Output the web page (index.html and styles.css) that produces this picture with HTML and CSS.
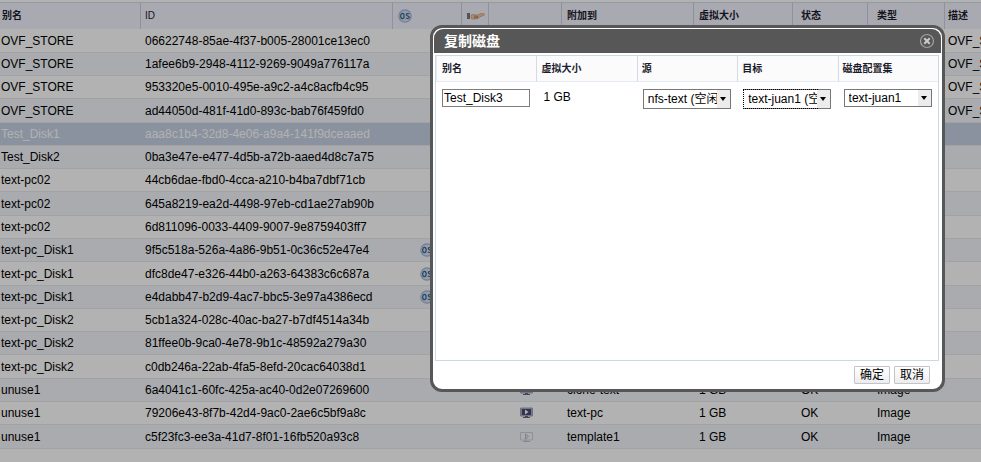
FILE: index.html
```html
<!DOCTYPE html>
<html lang="zh-CN">
<head>
<meta charset="utf-8">
<title>复制磁盘</title>
<link rel="stylesheet" href="styles.css">
</head>
<body>
<svg class="defs" aria-hidden="true">
  <symbol id="os" viewBox="0 0 14 14">
    <circle cx="7" cy="7" r="6.2" fill="#d3def2" stroke="#a9b4d4" stroke-width="1.2"/>
    <ellipse cx="4.4" cy="7" rx="1.7" ry="2.6" fill="none" stroke="#35688a" stroke-width="1.2"/>
    <path d="M11.4 5.1C10.3 4.100 8.200 4.400 8.300 5.700C8.400 7.200 11.300 6.700 11.300 8.300C11.300 9.800 8.900 9.800 7.900 8.900" fill="none" stroke="#35688a" stroke-width="1.2"/>
  </symbol>
  <symbol id="hand" viewBox="0 0 18 8">
    <path d="M0 1h3v6H0z" fill="#77778a"/><path d="M3 2h1v5H3z" fill="#fff"/>
    <path d="M4 3L7 2.500L10 3.200L14 1.600L17 1.600C18 2 17.600 3.300 16.500 3.500L13 4.700L11.500 6.200L9 7H5.500L4 6.400z" fill="#f3c5a0" stroke="#c98f66" stroke-width=".6"/>
    <path d="M7 4l4 .5M7 5.600h4.400" stroke="#a8683c" stroke-width=".7"/>
  </symbol>
  <symbol id="screen" viewBox="0 0 13 12">
    <path d="M.5 1h12v8H.5z" fill="#a9a9c8" stroke="#a0a0c4"/><path d="M2 2h9v6H2z" fill="#4b4b68"/>
    <path d="M5 2.500v5L8.500 5z" fill="#fff"/><path d="M5 9h3v1h2v1H3v-1h2z" fill="#65657d"/>
  </symbol>
  <symbol id="screen-off" viewBox="0 0 13 12">
    <path d="M.5 1.500h12v7.500H.5z" fill="#f5f5fa" stroke="#cfcfdd"/><path d="M5.500 3v5L8.500 5.500z" fill="none" stroke="#b4b4ca"/>
    <path d="M6 9v1M3 10.500h7" stroke="#bebed2"/>
  </symbol>
</svg>
<main class="page">
<table class="disks">
<colgroup><col class="w-name"><col class="w-id"><col class="w-os"><col class="w-share"><col class="w-icon"><col class="w-to"><col class="w-size"><col class="w-state"><col class="w-type"><col></colgroup>
<thead><tr><th>别名</th><th>ID</th><th><svg class="os"><use href="#os"/></svg></th><th><svg class="hand"><use href="#hand"/></svg></th><th class="plain"></th><th>附加到</th><th>虚拟大小</th><th class="state">状态</th><th class="type">类型</th><th>描述</th></tr></thead>
<tbody>
<tr><td>OVF_STORE</td><td>06622748-85ae-4f37-b005-28001ce13ec0</td><td></td><td></td><td></td><td></td><td></td><td></td><td></td><td>OVF_STORE</td></tr>
<tr><td>OVF_STORE</td><td>1afee6b9-2948-4112-9269-9049a776117a</td><td></td><td></td><td></td><td></td><td></td><td></td><td></td><td>OVF_STORE</td></tr>
<tr><td>OVF_STORE</td><td>953320e5-0010-495e-a9c2-a4c8acfb4c95</td><td></td><td></td><td></td><td></td><td></td><td></td><td></td><td>OVF_STORE</td></tr>
<tr><td>OVF_STORE</td><td>ad44050d-481f-41d0-893c-bab76f459fd0</td><td></td><td></td><td></td><td></td><td></td><td></td><td></td><td>OVF_STORE</td></tr>
<tr class="selected"><td>Test_Disk1</td><td>aaa8c1b4-32d8-4e06-a9a4-141f9dceaaed</td><td></td><td></td><td></td><td></td><td></td><td></td><td></td><td></td></tr>
<tr><td>Test_Disk2</td><td>0ba3e47e-e477-4d5b-a72b-aaed4d8c7a75</td><td></td><td></td><td></td><td></td><td></td><td></td><td></td><td></td></tr>
<tr><td>text-pc02</td><td>44cb6dae-fbd0-4cca-a210-b4ba7dbf71cb</td><td></td><td></td><td></td><td></td><td></td><td></td><td></td><td></td></tr>
<tr><td>text-pc02</td><td>645a8219-ea2d-4498-97eb-cd1ae27ab90b</td><td></td><td></td><td></td><td></td><td></td><td></td><td></td><td></td></tr>
<tr><td>text-pc02</td><td>6d811096-0033-4409-9007-9e8759403ff7</td><td></td><td></td><td></td><td></td><td></td><td></td><td></td><td></td></tr>
<tr><td>text-pc_Disk1</td><td>9f5c518a-526a-4a86-9b51-0c36c52e47e4</td><td class="mid"><svg class="os"><use href="#os"/></svg></td><td></td><td></td><td></td><td></td><td></td><td></td><td></td></tr>
<tr><td>text-pc_Disk1</td><td>dfc8de47-e326-44b0-a263-64383c6c687a</td><td class="mid"><svg class="os"><use href="#os"/></svg></td><td></td><td></td><td></td><td></td><td></td><td></td><td></td></tr>
<tr><td>text-pc_Disk1</td><td>e4dabb47-b2d9-4ac7-bbc5-3e97a4386ecd</td><td class="mid"><svg class="os"><use href="#os"/></svg></td><td></td><td></td><td></td><td></td><td></td><td></td><td></td></tr>
<tr><td>text-pc_Disk2</td><td>5cb1a324-028c-40ac-ba27-b7df4514a34b</td><td></td><td></td><td></td><td></td><td></td><td></td><td></td><td></td></tr>
<tr><td>text-pc_Disk2</td><td>81ffee0b-9ca0-4e78-9b1c-48592a279a30</td><td></td><td></td><td></td><td></td><td></td><td></td><td></td><td></td></tr>
<tr><td>text-pc_Disk2</td><td>c0db246a-22ab-4fa5-8efd-20cac64038d1</td><td></td><td></td><td></td><td></td><td></td><td></td><td></td><td></td></tr>
<tr><td>unuse1</td><td>6a4041c1-60fc-425a-ac40-0d2e07269600</td><td></td><td></td><td class="mid"><svg class="screen"><use href="#screen"/></svg></td><td>clone-text</td><td>1 GB</td><td class="state">OK</td><td class="type">Image</td><td></td></tr>
<tr><td>unuse1</td><td>79206e43-8f7b-42d4-9ac0-2ae6c5bf9a8c</td><td></td><td></td><td class="mid"><svg class="screen"><use href="#screen"/></svg></td><td>text-pc</td><td>1 GB</td><td class="state">OK</td><td class="type">Image</td><td></td></tr>
<tr><td>unuse1</td><td>c5f23fc3-ee3a-41d7-8f01-16fb520a93c8</td><td></td><td></td><td class="mid"><svg class="screen"><use href="#screen-off"/></svg></td><td>template1</td><td>1 GB</td><td class="state">OK</td><td class="type">Image</td><td></td></tr>
</tbody>
</table>
</main>
<div class="overlay">
<section class="dialog" role="dialog" aria-labelledby="title">
  <header class="bar"><h1 id="title">复制磁盘</h1>
    <button class="close" aria-label="关闭"><svg viewBox="0 0 16 16"><circle cx="8" cy="8" r="6.500" fill="none" stroke="#a2a2a2" stroke-width="1.200"/><path d="M5.300 5.300l5.400 5.400M10.700 5.300l-5.400 5.400" stroke="#ccc" stroke-width="2"/></svg></button>
  </header>
  <div class="content">
    <table class="copy">
      <thead><tr><th>别名</th><th>虚拟大小</th><th>源</th><th>目标</th><th>磁盘配置集</th></tr></thead>
      <tbody><tr>
        <td><input type="text" value="Test_Disk3" aria-label="别名"></td>
        <td class="size">1 GB</td>
        <td><span class="pick"><select aria-label="源"><option>nfs-text (空闲)</option></select></span></td>
        <td><span class="pick focus"><select aria-label="目标"><option>text-juan1 (空闲)</option></select></span></td>
        <td><span class="pick short"><select aria-label="磁盘配置集"><option>text-juan1</option></select></span></td>
      </tr></tbody>
    </table>
  </div>
  <footer class="actions"><button>确定</button><button>取消</button></footer>
</section>
</div>
</body>
</html>
```
FILE: styles.css
```css
* { box-sizing: border-box; }
html, body { height: 100%; }
body {
  margin: 0;
  overflow: hidden;
  background: #fff;
  color: #000;
  font: 12px/16px "Liberation Sans", "Noto Sans CJK SC", sans-serif;
}
.defs { position: absolute; width: 0; height: 0; }
svg { display: block; }
table { width: 100%; table-layout: fixed; border-collapse: separate; border-spacing: 0; }
th { text-align: left; font-size: 10px; font-weight: 700; color: #1c1c2c; white-space: nowrap; }
td { white-space: nowrap; overflow: hidden; }

.page { padding-top: 2px; }
.disks th {
  height: 27px;
  padding: 0 5px;
  background: #f3f3ff;
  border-top: 1px solid #d3dfec;
  border-left: 1px solid #d0d0e0;
}
.disks th:nth-child(2) { padding-left: 4px; font-weight: 400; }
.disks th:first-child { padding-left: 2px; border-left: 0; }
.disks th:last-child { padding-left: 3px; }
.disks td { height: 23px; padding: 0 1px 0 5px; border-bottom: 1px solid #e8e8ec; }
.disks td:first-child { padding-left: 1px; }
.disks td:last-child { padding-left: 4px; }
.disks td:nth-child(6), .disks td:nth-child(7) { padding-left: 6px; }
.disks th.state { padding-left: 8px; }
.disks td.state { padding-left: 9px; }
.disks th.type { padding-left: 9px; }
.disks td.type { padding-left: 10px; }
.disks tr:nth-child(7n+1) td, .disks tr:nth-child(7n+4) td { height: 24px; }
.disks tbody tr:nth-child(even) { background: #f3f5fb; }
.disks tbody tr.selected { background: #c5d1e2; color: #fff; }
.disks td.mid { padding: 0; }
.mid svg { margin: 0 auto; }
.mid .screen { margin-left: 32px; }
.w-name { width: 140px; }
.w-id { width: 252px; }
.w-os { width: 69px; }
.w-share { width: 27px; }
.w-icon { width: 73px; }
.w-to { width: 132px; }
.w-size { width: 99px; }
.w-state { width: 75px; }
.w-type { width: 77px; }
.os { width: 14px; height: 14px; }
.hand { width: 18px; height: 8px; }
.screen { width: 13px; height: 12px; }

.overlay {
  position: absolute;
  inset: 0;
  background: rgba(0, 0, 0, .3);
  padding: 25px 36px 70px 430px;
}
.dialog {
  height: 100%;
  display: flex;
  flex-direction: column;
  padding: 1px;
  background: #fff;
  border: 3px solid #575757;
  border-radius: 12px;
}
.bar {
  display: flex;
  align-items: center;
  justify-content: space-between;
  height: 24px;
  padding: 0 6px 0 10px;
  background: #575757;
  border-radius: 9px 9px 0 0;
}
.bar h1 { margin: 0; font-size: 14px; line-height: 20px; color: #fff; }
.close { width: 16px; height: 16px; padding: 0; border: 0; background: none; }
.content { flex: 1; margin: 2px 2px 0 1px; border: 1px solid #cbd9e0; }
.copy th { height: 26px; padding: 0 4px; background: #fbfbfc; border-bottom: 1px solid #e4ebf4; border-left: 1px solid #d4dbe4; }
.copy th:first-child { padding-left: 5px; border-color: #e4ebf4; }
.copy td { padding: 7px 0 0 6px; vertical-align: top; }
.copy .size { padding-left: 7px; }
input, select, button { font: inherit; color: #000; }
input { display: block; width: 88px; height: 18px; padding: 0 1px; border: 1px solid #7d7d7d; background: #fff; }
.pick { display: block; position: relative; width: 88px; height: 20px; border: 1px solid #777; }
.pick.short { height: 18px; }
.pick select { display: block; appearance: none; width: 100%; height: 100%; padding: 0 13px 0 4px; border: 0; border-radius: 0; background: #fff; outline: 0; text-overflow: clip; }
.pick::before { content: ""; position: absolute; top: 0; right: 0; bottom: 0; width: 13px; background: #ececec; pointer-events: none; }
.pick::after { content: ""; position: absolute; top: 50%; right: 4px; margin-top: -2px; border: 3px solid transparent; border-top: 4px solid #000; border-bottom: 0; pointer-events: none; }
.pick.focus { border-color: #777 #777 #777 #fff; }
.pick.focus select { width: calc(100% - 13px); padding-right: 0; outline: 1px dotted #000; }
.actions { display: flex; justify-content: flex-end; gap: 4px; padding: 5px 11px 4px; }
.actions button { width: 36px; height: 18px; padding: 0; line-height: 16px; background: linear-gradient(#fff, #ececee); border: 1px solid #c4c4c8; border-radius: 1px; }
```
